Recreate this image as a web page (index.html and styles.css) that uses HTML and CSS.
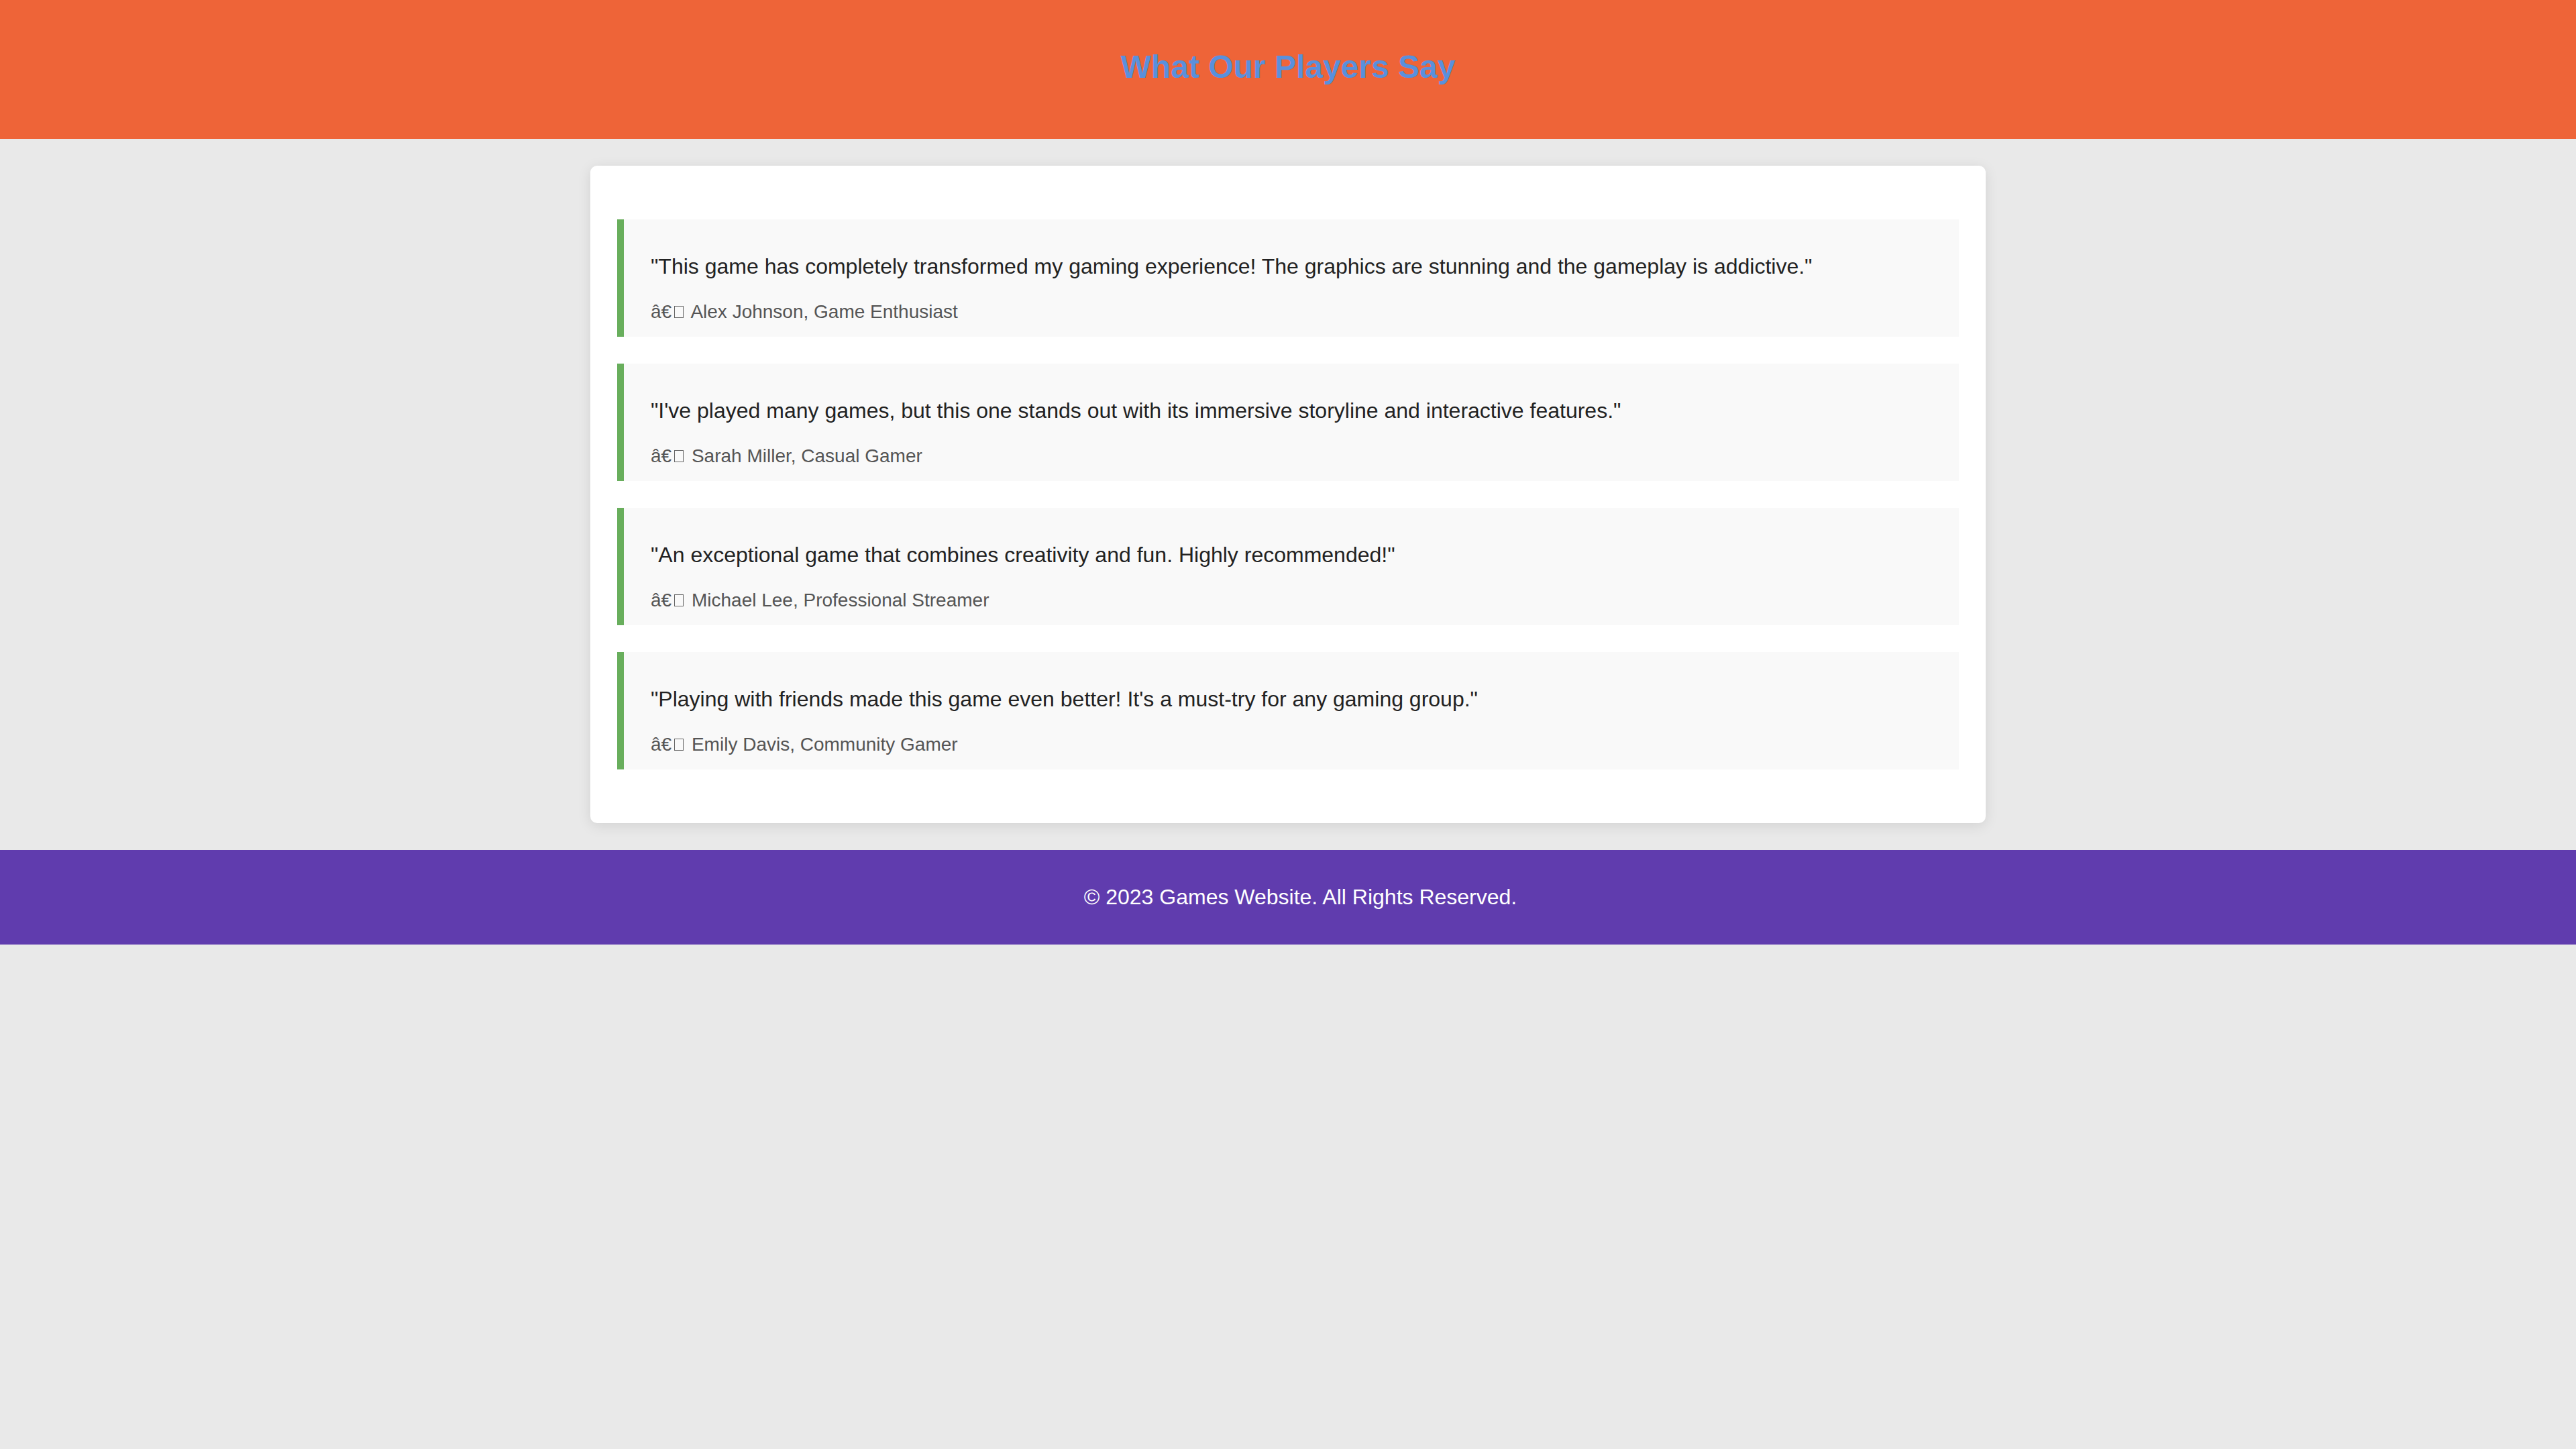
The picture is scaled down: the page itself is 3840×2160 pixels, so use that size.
FILE: index.html
```html
<!DOCTYPE html>
<html lang="en">
<head>
<meta charset="utf-8">
<title>What Our Players Say</title>
<link rel="stylesheet" href="styles.css">
</head>
<body>
<header class="site-header">
  <h1 class="title">What Our Players Say</h1>
</header>
<main class="card">
  <section class="testimonial">
    <p class="quote">"This game has completely transformed my gaming experience! The graphics are stunning and the gameplay is addictive."</p>
    <div class="author">â€<span class="tofu"></span> Alex Johnson, Game Enthusiast</div>
  </section>
  <section class="testimonial">
    <p class="quote">"I've played many games, but this one stands out with its immersive storyline and interactive features."</p>
    <div class="author">â€<span class="tofu"></span> Sarah Miller, Casual Gamer</div>
  </section>
  <section class="testimonial">
    <p class="quote">"An exceptional game that combines creativity and fun. Highly recommended!"</p>
    <div class="author">â€<span class="tofu"></span> Michael Lee, Professional Streamer</div>
  </section>
  <section class="testimonial">
    <p class="quote">"Playing with friends made this game even better! It's a must-try for any gaming group."</p>
    <div class="author">â€<span class="tofu"></span> Emily Davis, Community Gamer</div>
  </section>
</main>
<footer class="site-footer">
  <p class="copy">© 2023 Games Website. All Rights Reserved.</p>
</footer>
</body>
</html>
```

FILE: styles.css
```css
html, body {
  margin: 0;
  padding: 0;
}
body {
  background: #e9e9e9;
  font-family: "Liberation Sans", Arial, sans-serif;
  font-size: 32px;
  color: #222;
}
.site-header {
  background: #ee6438;
  padding: 40px 0 48px;
  text-align: center;
}
.title {
  margin: 32px 0;
  font-size: 48px;
  line-height: 55px;
  font-weight: bold;
  color: #5a90dc;
}
.card {
  display: block;
  max-width: 2000px;
  margin: 40px auto;
  padding: 40px;
  background: #ffffff;
  border-radius: 10px;
  box-shadow: 0 4px 20px rgba(0, 0, 0, 0.1);
}
.testimonial {
  margin: 40px 0;
  padding: 20px 40px 21px;
  background: #f9f9f9;
  border-left: 10px solid #68ae5c;
}
.quote {
  margin: 32px 0;
  font-size: 32px;
  line-height: 37px;
  color: #222;
}
.author {
  font-size: 28px;
  line-height: 33px;
  color: #555;
}
.tofu {
  display: inline-block;
  box-sizing: border-box;
  width: 14px;
  height: 18px;
  margin: 0 4px 0 4px;
  border: 1.5px solid #666;
  vertical-align: baseline;
}
.site-footer {
  background: #603cae;
  padding: 20px 0;
  text-align: center;
}
.copy {
  margin: 32px 0;
  padding-left: 37px;
  font-size: 32px;
  line-height: 37px;
  color: #ffffff;
}
```
